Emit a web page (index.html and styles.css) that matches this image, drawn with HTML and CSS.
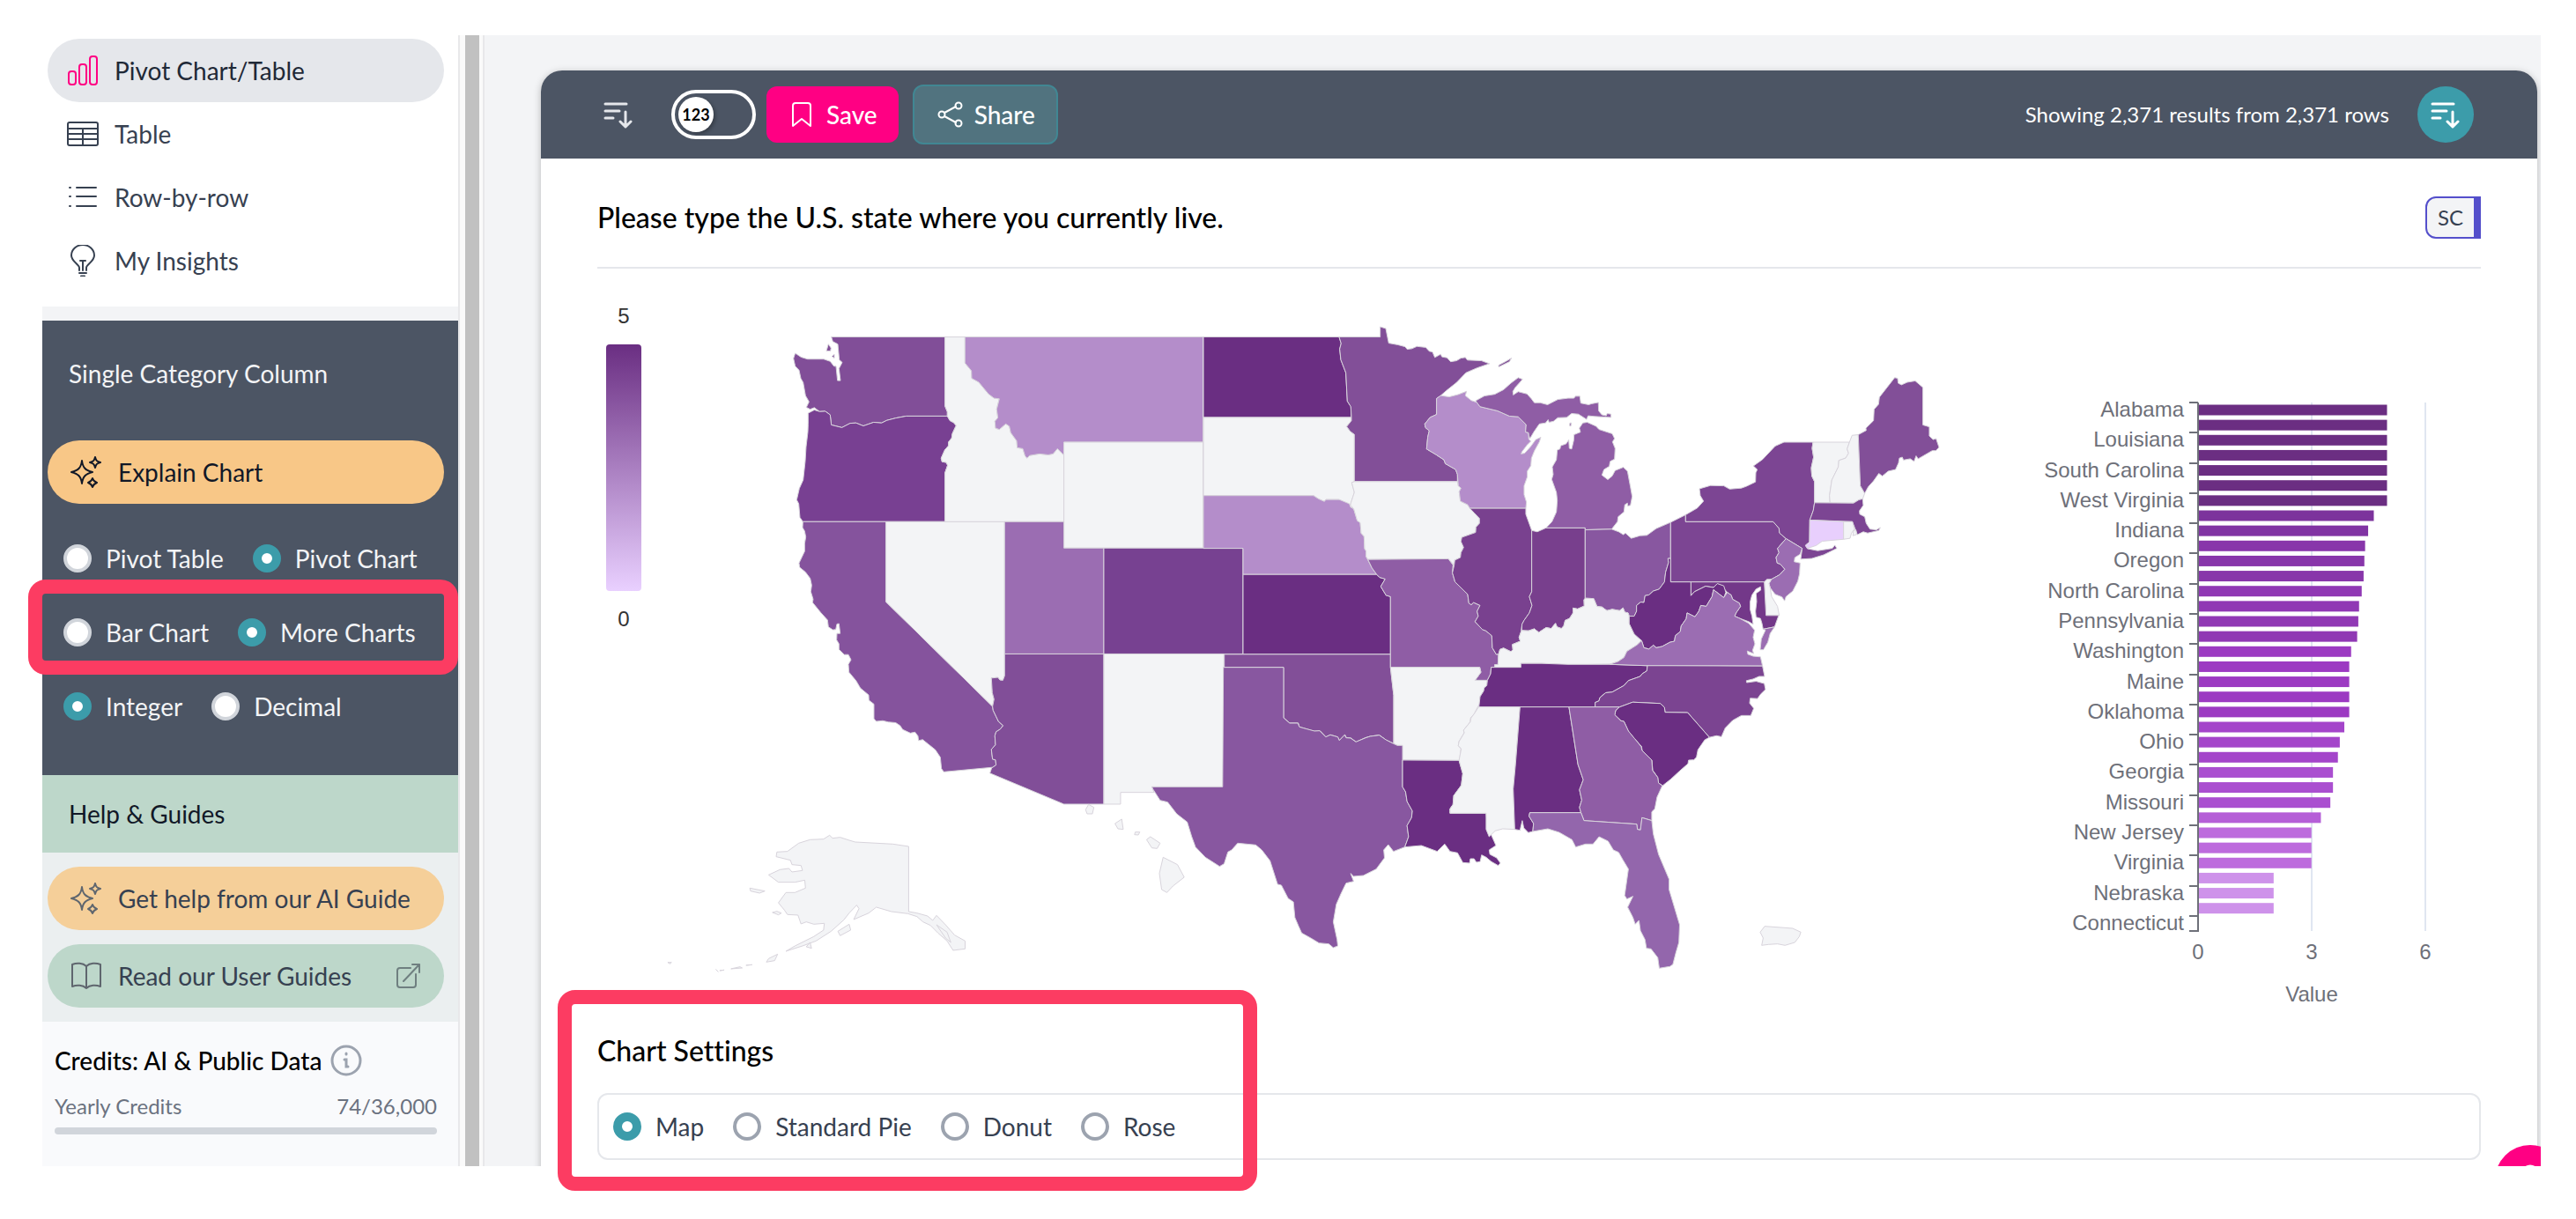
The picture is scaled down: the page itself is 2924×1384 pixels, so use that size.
FILE: index.html
```html
<!DOCTYPE html>
<html lang="en">
<head>
    <meta charset="UTF-8">
    <meta name="viewport" content="width=device-width, initial-scale=1">
    <title>Pivot Chart/Table</title>
    <link rel="stylesheet" href="styles.css">
</head>
<body>
    <div class="page">
        <div class="app">
            <aside class="sidebar">
                <nav class="nav">
                    <a class="nav-item active" href="#">
                        <svg class="icon" viewBox="0 0 36 36"><rect x="2" y="19" width="8" height="15" rx="3"/><rect x="14" y="11" width="8" height="23" rx="3"/><rect x="26" y="2" width="8" height="32" rx="3"/></svg>
                        Pivot Chart/Table
                    </a>
                    <a class="nav-item" href="#">
                        <svg class="icon" viewBox="0 0 36 36"><rect x="1" y="5" width="34" height="26" rx="2"/><path d="M1 12h34M1 18h34M1 24h34M18 12v19"/></svg>
                        Table
                    </a>
                    <a class="nav-item" href="#">
                        <svg class="icon" viewBox="0 0 36 36"><path d="M11 7h22M11 17h22M11 28h22M3 7h1M3 17h1M3 28h1"/></svg>
                        Row-by-row
                    </a>
                    <a class="nav-item" href="#">
                        <svg class="icon" viewBox="0 0 36 36"><path d="M14 29v-3c0-4-9-7-9-14a13 12 0 0 1 26 0c0 7-9 10-9 14v3M18 18v11M15 18h6M14 32h8M16 35.500h4"/></svg>
                        My Insights
                    </a>
                </nav>
                <section class="controls">
                    <h2 class="side-title">Single Category Column</h2>
                    <button class="pill orange" type="button">
                        <svg class="icon" viewBox="0 0 36 36"><path d="M13 5c1 8 4 11 12 13-8 2-11 5-12 13-1-8-4-11-12-13 8-2 11-5 12-13zM28 1c1 4 2 5 6 6-4 1-5 2-6 6-1-4-2-5-6-6 4-1 5-2 6-6zM25 25c1 3 2 4 5 5-3 1-4 2-5 5-1-3-2-4-5-5 3-1 4-2 5-5z"/></svg>
                        Explain Chart
                    </button>
                    <div class="radio-rows">
                        <div class="radio-row">
                            <label class="radio"><input type="radio" name="pivot">Pivot Table</label>
                            <label class="radio"><input type="radio" name="pivot" checked>Pivot Chart</label>
                        </div>
                        <div class="radio-row">
                            <label class="radio"><input type="radio" name="charts">Bar Chart</label>
                            <label class="radio"><input type="radio" name="charts" checked>More Charts</label>
                        </div>
                        <div class="radio-row">
                            <label class="radio"><input type="radio" name="number" checked>Integer</label>
                            <label class="radio"><input type="radio" name="number">Decimal</label>
                        </div>
                    </div>
                </section>
                <h2 class="side-title help-title">Help &amp; Guides</h2>
                <section class="help">
                    <button class="pill orange" type="button">
                        <svg class="icon" viewBox="0 0 36 36"><path d="M13 5c1 8 4 11 12 13-8 2-11 5-12 13-1-8-4-11-12-13 8-2 11-5 12-13zM28 1c1 4 2 5 6 6-4 1-5 2-6 6-1-4-2-5-6-6 4-1 5-2 6-6zM25 25c1 3 2 4 5 5-3 1-4 2-5 5-1-3-2-4-5-5 3-1 4-2 5-5z"/></svg>
                        Get help from our AI Guide
                    </button>
                    <a class="pill green" href="#">
                        <svg class="icon" viewBox="0 0 36 36"><path d="M18 7C14 3 7 3 2 5v25c5-2 12-2 16 2 4-4 11-4 16-2V5c-5-2-12-2-16 2zv25"/></svg>
                        Read our User Guides
                        <svg class="icon external" viewBox="0 0 28 28"><path d="M16 5H4a3 3 0 0 0-3 3v16a3 3 0 0 0 3 3h15a3 3 0 0 0 3-3V12M8 20L26 1M18 1h8v9"/></svg>
                    </a>
                </section>
                <section class="credits">
                    <h3 class="credits-title">Credits: AI &amp; Public Data
                        <svg class="info" viewBox="0 0 36 36"><circle cx="18" cy="18" r="16"/><path d="M18 10v1M16 17h2v8h2"/></svg>
                    </h3>
                    <div class="credits-line"><span>Yearly Credits</span><span>74/36,000</span></div>
                    <div class="credits-bar"></div>
                </section>
            </aside>
            <div class="scrollbar"></div>
            <main class="main">
                <article class="card">
                    <header class="toolbar">
                        <button class="sort" type="button" aria-label="Sort">
                            <svg viewBox="0 0 36 32"><path d="M3 4h24M3 12h16M3 20h9M26 13v16M20 24l6 6 6-6"/></svg>
                        </button>
                        <button class="toggle" type="button" role="switch" aria-checked="false"><span class="knob">123</span></button>
                        <button class="btn save" type="button">
                            <svg class="icon" viewBox="0 0 32 32"><path d="M6 29V6a3 3 0 0 1 3-3h14a3 3 0 0 1 3 3v23l-10-8z"/></svg>
                            Save
                        </button>
                        <button class="btn share" type="button">
                            <svg class="icon" viewBox="0 0 32 32"><circle cx="7" cy="16" r="3.500"/><circle cx="26" cy="6" r="3.500"/><circle cx="26" cy="26" r="3.500"/><path d="M10 14l13-7M10 18l13 7"/></svg>
                            Share
                        </button>
                        <span class="results">Showing 2,371 results from 2,371 rows</span>
                        <button class="sort round" type="button" aria-label="Sort results">
                            <svg viewBox="0 0 36 32"><path d="M3 4h24M3 12h16M3 20h9M26 13v16M20 24l6 6 6-6"/></svg>
                        </button>
                    </header>
                    <div class="card-body">
                        <div class="question">
                            <h1>Please type the U.S. state where you currently live.</h1>
                            <span class="badge">SC</span>
                        </div>
                        <div class="charts">
                            <div class="legend">
                                <span>5</span>
                                <div class="legend-scale"></div>
                                <span>0</span>
                            </div>
                            <svg class="map" viewBox="0 0 1502 824">
                                <!-- west -->
                                <g transform="translate(142 45) scale(.3333 .3699)">
                                    <path fill="#814e98" d="M191 88H578V300L586 318V331H446L410 337 380 344 362 352 335 350 300 361 275 352 255 353 227 366 191 358 187 327 170 316 151 317 133 305 119 310 106 304 115 287 103 268 95 228 87 215 81 190 68 178 62 154 68 138 88 150 110 156 165 156 187 163 200 178 207 178 212 222 222 222 217 185 228 166 218 158 213 110 196 102ZM181 110L190 122 188 131 174 131ZM201 141V153L193 148Z"/>
                                    <path fill="#784092" d="M112 322L133 312 151 317 170 316 187 327 191 358 227 366 255 353 275 352 300 361 335 350 362 352 380 344 410 337 446 331H586L595 345 608 351 616 360 603 385 601 398 590 411 590 422 578 434 565 460 568 471 582 473 587 482 578 505V655H94L84 642 80 600 73 588 82 553 95 527 102 470 105 425 111 380 112 355Z"/>
                                    <path fill="#85539d" d="M94 655H377V901L740 1222 742 1234 760 1268 776 1281 766 1292 752 1300 748 1312 750 1340 736 1354 740 1384 750 1386 752 1402 740 1409 574 1423 566 1413 562 1378 545 1355 520 1337 502 1324 488 1327 486 1313 476 1301 460 1304 434 1293 425 1281 410 1272 385 1270 366 1266 344 1268 336 1260 336 1215 319 1203 318 1187 290 1166 275 1143 251 1117 249 1093 258 1079 249 1063 235 1063 217 1047 217 1030 209 1018 210 998 221 998 217 968 210 969 206 986 196 987 181 978 178 957 155 934 127 903 129 893 121 870 124 850 119 829 103 810 83 795 81 782 100 746 100 722 104 702 100 684 93 673Z"/>
                                    <path fill="#f3f4f6" d="M377 655H781V1128L775 1142 765 1141 758 1133 736 1135 739 1180 745 1200 740 1222 377 901Z"/>
                                    <path fill="#f3f4f6" d="M578 88H646V168L668 192 669 215 693 227 726 263 745 276 763 278 754 310 758 336 748 347 750 368 763 372 785 355 797 362 802 382 822 407 824 428 843 431 851 454 858 460 866 452 900 447 930 450 946 447 961 431 983 451V655H578V505L587 482 582 473 568 471 565 460 578 434 590 422 590 411 601 398 603 385 616 360 608 351 595 345 586 331 586 318 578 300Z"/>
                                    <path fill="#b48dca" d="M646 88H1457V411H983V451L961 431 946 447 930 450 900 447 866 452 858 460 851 454 843 431 824 428 822 407 802 382 797 362 785 355 763 372 750 368 748 347 758 336 754 310 763 278 745 276 726 263 693 227 669 215 668 192 646 168Z"/>
                                    <path fill="#f3f4f6" d="M983 411H1457V736H983Z"/>
                                    <path fill="#9b6db2" d="M781 655H983V736H1119V1061H781Z"/>
                                    <path fill="#774191" d="M1119 736H1593V1061H1119Z"/>
                                    <path fill="#814e98" d="M781 1061H1119V1522H983L731 1427 737 1411 752 1402 750 1386 740 1384 736 1354 750 1340 748 1312 752 1300 766 1292 776 1281 760 1268 742 1234 740 1222 745 1200 739 1180 736 1135 758 1133 765 1141 775 1142 781 1128Z"/>
                                    <path fill="#f3f4f6" d="M1119 1061H1528L1525 1469H1283L1290 1486H1176V1522H1119Z"/>
                                </g>
                                <!-- central -->
                                <g transform="translate(602 45) scale(.3333 .3699)">
                                    <path fill="#6a2e82" d="M78 88H540L547 108 542 125 546 158 563 198 568 285 580 302 582 335H78Z"/>
                                    <path fill="#f3f4f6" d="M78 335H582V345L566 363 578 378 592 387V532L583 535 592 565 580 598 579 604 540 587 495 587 490 593 470 585 453 575H78Z"/>
                                    <path fill="#b48dca" d="M78 575H453L470 585 490 593 495 587H540L575 600 579 610 590 616 602 652 612 658 615 690 625 700 627 738 632 745 632 762 652 797 668 817H213V737H78Z"/>
                                    <path fill="#6a2e82" d="M213 817H668L678 826 697 831 682 854 700 881 715 885V1062H213Z"/>
                                    <path fill="#824f98" d="M149 1062H715V1102L726 1188V1336L700 1325 677 1310 645 1314 630 1318 598 1331 580 1319 565 1318 560 1309 541 1326 535 1316 510 1309 495 1316 475 1297 455 1298 405 1285 401 1273 372 1273 351 1257V1102H149Z"/>
                                    <path fill="#824f98" d="M540 88H680V57L699 62 709 107 740 112 765 118 772 126 788 124 805 117 835 120 847 132 858 134 866 151 886 141 890 149 908 152 920 164 940 161 955 153 970 151 977 159 1025 161 1052 170 1010 183 972 198 940 228 905 253 886 268 872 277V326L850 335 832 355 834 366 847 376 842 395 838 432 868 448 897 465 902 477 937 495 943 510V532H592V387L578 378 566 363 582 345V335L580 302 568 285 563 198 546 158 542 125 547 108Z"/>
                                    <path fill="#f3f4f6" d="M592 532H943L946 545 955 552 949 563 953 592 978 603 1000 628 1018 645 1018 660 1006 672 1005 688 958 703 955 716 964 734 955 750 953 765 934 773 932 788 912 769 638 771 632 762 632 745 627 738 625 700 615 690 612 658 602 652 590 616 579 604 580 598 592 565 583 535Z"/>
                                    <path fill="#8f5da5" d="M638 771L912 769 928 788 926 812 935 840 978 878 982 905 990 910 998 903 1020 912 1010 930 1014 945 1003 962 1028 986 1040 990 1060 1005 1062 1042 1075 1062 1083 1062 1081 1094 1070 1094 1070 1102 1058 1102 1056 1122 1045 1142H1003L1023 1117 1019 1102H715V885L700 881 682 854 697 831 678 826 668 817 652 797Z"/>
                                    <path fill="#f3f4f6" d="M715 1102H1019L1023 1117 1003 1142H1045L1043 1158 1034 1165 1032 1175 1020 1192 1020 1212 1012 1224 1000 1245 988 1257 986 1270 964 1295 966 1303 948 1330 946 1343 955 1352 950 1388 755 1386V1342H738L726 1336V1188Z"/>
                                    <path fill="#b48dca" d="M886 268L915 272 945 265 974 255 970 268 990 283 1010 289 1020 302 1080 315 1120 331 1150 333 1177 357 1175 380 1185 382 1186 402 1193 408 1180 420 1163 440 1160 447 1172 445 1193 424 1210 403 1227 396 1222 410 1205 438 1195 460 1193 483 1181 500 1181 517 1170 545 1170 572 1178 595 1176 614H985L978 603 953 592 949 563 955 552 946 545 943 510 937 495 902 477 897 465 868 448 838 432 842 395 847 376 834 366 832 355 850 335 872 326V277Z"/>
                                    <path fill="#79418f" d="M985 614H1176V632L1196 682V870L1188 885 1197 912 1188 935 1170 958 1163 970 1160 992 1153 1010 1157 1022 1130 1032 1132 1048 1125 1054 1100 1043 1088 1047 1083 1062 1075 1062 1062 1042 1060 1005 1040 990 1028 986 1003 962 1014 945 1010 930 1020 912 998 903 990 910 982 905 978 878 935 840 926 812 932 788 934 773 953 765 955 750 964 734 955 716 958 703 1005 688 1006 672 1018 660 1018 645 1000 628Z"/>
                                    <path fill="#783f8d" d="M1196 682L1215 686 1245 674H1378V890L1374 895 1375 914 1352 923 1337 920 1337 935 1325 952 1310 958 1305 975 1297 983 1282 978 1277 967 1262 983 1245 980 1220 995 1205 984 1185 990 1162 989 1163 970 1170 958 1188 935 1197 912 1188 885 1196 870Z"/>
                                    <path fill="#8f5da5" d="M1005 284L1035 269 1070 264 1100 250 1125 230 1150 213 1165 218 1140 243 1132 255 1133 266 1150 256 1180 263 1195 278 1205 290 1225 290 1250 296 1285 280 1320 276 1340 276 1345 270 1360 270 1363 291 1390 296 1400 293 1423 289 1424 315 1435 327 1450 330 1453 323 1466 325 1466 335 1410 332 1388 330 1383 341 1355 325 1332 323 1315 335 1285 336 1270 347 1255 350 1252 342 1243 352 1222 355 1203 380 1190 400 1186 390 1185 382 1175 380 1177 357 1150 333 1120 331 1080 315 1020 302ZM1326 352L1331 352 1329 362 1325 360Z"/>
                                    <path fill="#824f98" d="M1083 175L1108 163 1127 153 1120 164 1084 180Z"/>
                                </g>
                                <!-- east -->
                                <g transform="translate(1042 45) scale(.3333 .3699)">
                                    <path fill="#8f5da5" d="M-75 674L-55 655-40 625-37 590-40 565-56 525-51 510-54 487-40 465-37 435-28 432-25 422-7 416 2 404 4 430 12 432 19 405 20 388 42 380 38 368 50 352 65 350 95 362 105 372 150 385 158 400 151 410 160 430 158 463 143 470 140 485 122 495 115 512 135 526 150 515 160 498 188 488 202 500 212 548 218 578 212 605 203 607 202 598 193 603 190 625 170 640 168 655 148 678 58 680V674Z"/>
                                    <path fill="#8857a0" d="M58 680L148 678 172 686 188 695 195 690 215 706 245 698 268 697 300 676 349 657V768L340 768 342 780 332 810 328 840 310 862 290 868 275 880 262 882 258 903 247 902 233 912 233 930 225 945 208 945 204 935 193 933 187 920 175 928 150 924 132 928 115 917 98 915 87 891 58 890Z"/>
                                    <path fill="#f3f4f6" d="M58 890L87 891 98 915 115 917 132 928 150 924 175 928 187 920 193 933 204 935 208 945 208 968 225 1000 250 1020 235 1033 200 1053 190 1072 170 1084 142 1092 0 1095-90 1090-161 1090V1102H-250V1094H-239L-237 1062-232 1047-220 1043-195 1054-188 1048-190 1032-163 1022-167 1010-160 992-158 989-135 990-115 984-100 995-75 980-58 983-43 967-38 978-23 983-15 975-10 958 5 952 17 935 17 920 32 923 55 914 54 895Z"/>
                                    <path fill="#6a2e82" d="M-262 1102H-161V1090L-90 1090 0 1093 142 1093 270 1097 268 1113 252 1122 245 1130 205 1143 190 1158 150 1178 128 1180 108 1195 105 1205 92 1210V1224H-304L-300 1192-288 1175-286 1165-277 1158-275 1142-264 1122Z"/>
                                    <path fill="#7c4593" d="M349 657L400 634V655H698L718 675 720 690 742 707 713 737 718 750 708 765 712 782 722 785 738 801 720 818 692 832 668 840H349Z"/>
                                    <path fill="#7c4593" d="M400 634L440 613 461 592 450 575 447 554 485 544 530 545 550 555 590 552 608 546 638 533 639 505 644 495 631 484 662 464 705 423 735 411H834L831 430 836 457 828 490 830 515 839 532V597L835 620 823 650 822 717 808 728 815 738 850 744 900 737 908 727 915 737 870 757 830 768 792 770 797 737 742 707 720 690 718 675 698 655H400Z"/>
                                    <path fill="#9b6db2" d="M742 707L797 737 790 755 772 765 770 778 790 782 788 815 782 838 765 868 742 885 737 898 728 886 705 878 688 858 684 845 692 832 720 818 738 801 722 785 712 782 708 765 718 750 713 737Z"/>
                                    <path fill="#f3f4f6" d="M668 840L677 832 692 832 684 845 688 858 693 885 713 915 719 943H674Z"/>
                                    <path fill="#733889" d="M418 840H668L674 943H717L703 978 664 985 660 967 655 952 640 948 638 930 642 900 640 875 656 865 655 855 640 862 626 880 620 900 620 925 626 945 630 970 615 962 585 952 567 945 572 935 587 915 583 905 560 893 555 880 542 872 528 858 508 848 495 857 468 853 430 870 418 882Z"/>
                                    <path fill="#6a2e82" d="M349 768V840H418V882L430 870 468 853 495 857 508 845 530 852 537 872 530 888 495 864 490 885 470 915 452 912 445 930 432 947 405 935 402 953 385 975 382 992 365 1005 362 1022 347 1025 320 1038 300 1042 290 1034 275 1046 258 1042 250 1020 225 1000 208 968V945H225L233 930 233 912 247 902 258 903 262 882 275 880 290 868 310 862 328 840 332 810 342 780 340 768Z"/>
                                    <path fill="#9b6db2" d="M495 864L530 888 542 872 555 880 560 893 583 905 587 915 572 935 567 945 585 952 615 967 635 988 630 1010 636 1030 628 1050 632 1060 610 1052 612 1062 630 1068 655 1070 662 1098 330 1097 270 1097 142 1093 170 1084 190 1072 200 1053 235 1033 250 1020 258 1042 275 1046 290 1034 300 1042 320 1038 347 1025 362 1022 365 1005 382 992 385 975 402 953 405 935 432 947 445 930 452 912 470 915 490 885ZM664 985L703 978 688 998 680 1025 665 1048 654 1048 658 1015 672 988Z"/>
                                    <path fill="#7b4491" d="M270 1097H330L662 1098 669 1130 650 1130 630 1138 607 1143 608 1149 640 1145 668 1152 672 1170 655 1185 645 1198 620 1197 618 1212 632 1228 622 1250 590 1250 560 1265 535 1288 522 1315 505 1312 481 1317 407 1241 330 1240 328 1225 314 1213 220 1209 175 1224H92V1210L105 1205 108 1195 128 1180 150 1178 190 1158 205 1143 245 1130 252 1122 268 1113Z"/>
                                    <path fill="#6a2e82" d="M175 1224L220 1209 314 1213 328 1225 330 1240 407 1241 481 1317 465 1325 442 1355 437 1378 428 1386 410 1387 408 1398 380 1420 350 1445 322 1465 307 1457 305 1440 288 1418 285 1387 252 1357 250 1345 225 1320 205 1298 190 1268 180 1266 158 1248 162 1235Z"/>
                                    <path fill="#f3f4f6" d="M834 411H958L950 432 955 445 945 460 922 467 920 487 898 527 890 575 892 597H839V532L830 515 828 490 836 457 831 430Z"/>
                                    <path fill="#f3f4f6" d="M958 411L967 390 988 388 995 545 1010 568 1003 585 990 588 972 598 892 597 890 575 898 527 920 487 922 467 945 460 955 445 950 432Z"/>
                                    <path fill="#824f98" d="M988 388L1015 375 1014 368 1040 345 1042 310 1057 295 1060 273 1112 213 1122 215 1124 230 1135 235 1155 227 1182 223 1208 243V358L1230 364 1230 392 1243 403 1253 400 1263 427 1252 437 1240 437 1215 450 1192 462 1185 453 1178 470 1165 462 1142 466 1138 457 1128 460 1125 475 1115 495 1090 500 1070 515 1058 507 1040 530 1022 548 1010 568 995 545Z"/>
                                    <path fill="#7c4593" d="M839 597L972 598 990 588 1003 585 1005 605 992 622 993 632 1010 640 1015 660 1028 678 1050 680 1063 673 1058 682 1020 690 1005 686 985 695 968 655 823 650 835 620Z"/>
                                    <path fill="#e8cffd" d="M823 650L938 655V709L865 715 845 728 815 737 808 728 822 717Z"/>
                                    <path fill="#f3f4f6" d="M938 655H968L975 678 965 690 960 706 938 709ZM972 682L980 680 983 694 970 698Z"/>
                                </g>
                                <!-- south and islands -->
                                <g transform="translate(2 545) scale(.8546 .3333)">
                                    <path fill="#8857a0" d="M759-277H839V-105L847-87 858-87 860-74 880-60 887-61 895-40 901-47 911-40 913-28 920-47 922-37 928-36 935-23 948-37 954-42 966-46 975-30 985-17 990-11 997-11V130L1001 147 1003 180 1010 212 1009 235 1003 262 1005 300 1000 335 985 350 978 327 972 345 973 372 962 410 945 432 932 435 928 425 932 452 922 458 915 495 909 530 905 590 910 650 911 672 905 678 899 665 886 662 875 645 863 628 859 605 854 575 852 522 845 510 836 465 831 462 821 382 810 345 802 328 778 322 770 345 765 352 760 392 754 401 735 370 722 335 717 300 711 250 697 222 685 182 675 176 666 140 664 130H758Z"/>
                                    <path fill="#6a2e82" d="M997 39L1072 40 1077 85 1075 125 1065 160 1064 190 1060 205 1060 220H1108L1110 270 1115 295 1119 318 1121 330 1112 345 1113 360 1122 372 1127 390 1124 398 1115 385 1108 370 1102 362 1100 385 1095 387 1092 375 1087 375 1086 390 1077 388 1070 355 1060 350 1053 325 1043 350 1022 330 1000 335 1005 300 1003 262 1009 235 1010 212 1003 180 1001 147 997 130Z"/>
                                    <path fill="#f3f4f6" d="M1098-142H1153L1147 54 1144 137 1146 275 1130 273 1120 280 1112 300 1108 275 1108 220H1060V205L1064 190 1065 160 1075 125 1077 85 1072 40 1075 0 1071-10 1072-24 1079-54 1078-63 1087-91 1088-105 1092-118Z"/>
                                    <path fill="#6a2e82" d="M1153-142H1218L1230 54 1237 106 1232 140 1235 175 1232 200 1234 218H1166L1165 230 1171 255 1170 282 1164 286 1158 270 1156 245 1153 278 1146 275 1144 137 1147 54Z"/>
                                    <path fill="#8f5da5" d="M1218-142H1285L1280-130 1279-115 1287-95 1291-93 1297-60 1305-35 1314-7 1315 6 1328 39 1329 74 1336 98 1337 117 1342 126 1335 165 1332 205 1328 215V245L1322 240 1315 235 1313 277 1309 275 1308 257 1238 245 1234 218 1232 200 1235 175 1232 140 1237 106 1230 54Z"/>
                                    <path fill="#9366ac" d="M1166 218H1234L1238 245 1308 257 1309 275 1313 277 1315 235 1328 245 1330 290 1337 360 1351 445 1351 480 1358 540 1365 600 1364 660 1360 695 1356 735 1352 742 1338 748 1336 712 1327 682 1321 680 1319 650 1313 620 1311 585 1306 598 1303 575 1296 540 1303 503 1295 512 1292 500 1297 410 1290 380 1284 353 1277 345 1270 315 1258 300 1250 325 1240 325 1227 335 1222 310 1205 285 1190 273 1170 282 1171 255 1165 230Z"/>
                                    <path fill="#f3f4f6" d="M236 295L240 305 250 302 262 312 270 318 320 325 341 333V555L352 560 366 570 373 585 378 568 390 600 402 635 416 655 416 682 400 687 392 655 380 628 370 602 360 590 352 572 340 562 318 555 298 540 288 560 268 582 275 545 272 533 262 560 255 583 238 622 218 655 200 672 178 690 190 672 215 640 228 618 229 595 215 598 205 590 198 597 194 567 180 565 176 550 168 525 178 490 190 490 204 475 203 448 190 455 168 455 155 430 170 412 182 408 186 420 200 415 198 398 186 395 184 380 165 368 166 352 180 350 195 322 210 310 228 308Z"/>
                                    <path fill="#f3f4f6" d="M130 475L150 485 143 492 131 485ZM160 558L166 554 172 560 168 566ZM262 598L264 618 250 637 247 622ZM167 700L163 722 152 727 155 715ZM105 750L117 743 120 747ZM85 752L88 760ZM90 756L96 754ZM21 728H26L24 733ZM125 738L133 736ZM378 600L392 625 397 660 390 645ZM210 660L212 680 205 675Z"/>
                                    <path fill="#f3f4f6" d="M580 190L587 200 585 222 578 222 576 208ZM624 240L626 275 619 273 615 255ZM642 284H648L646 294 641 293ZM662 300L668 310 675 322 671 340 664 338 657 310ZM679 370L698 395 707 438 692 468 684 490 677 480 674 425Z"/>
                                    <path fill="#f3f4f6" d="M1478 605L1515 612 1526 625 1524 640 1518 660 1505 670 1495 665 1483 667 1474 670 1476 645 1472 625Z"/>
                                </g>
                            </svg>
                            <svg class="bars" id="bars" viewBox="0 0 576 824"></svg>
                        </div>
                        <h2 class="settings-title">Chart Settings</h2>
                        <div class="settings">
                            <label class="radio"><input type="radio" name="type" checked>Map</label>
                            <label class="radio"><input type="radio" name="type">Standard Pie</label>
                            <label class="radio"><input type="radio" name="type">Donut</label>
                            <label class="radio"><input type="radio" name="type">Rose</label>
                        </div>
                    </div>
                </article>
            </main>
            <button class="chat" type="button" aria-label="Chat">
                <svg viewBox="0 0 80 80"><circle cx="40" cy="33" r="9"/></svg>
            </button>
        </div>
        <div class="highlight highlight-charts"></div>
        <div class="highlight highlight-settings"></div>
    </div>
    <script src="chart.js"></script>
</body>
</html>
```
FILE: styles.css
```css
* {
    box-sizing: border-box;
    margin: 0;
    padding: 0;
}
body {
    font-family: Lato, "Liberation Sans", sans-serif;
    font-size: 28px;
    font-variant-ligatures: none;
    line-height: 40px;
    color: #000;
    background-color: #fff;
}
h1, h2, h3 {
    font-weight: 500;
}
button {
    font: inherit;
    font-variant-ligatures: none;
    border: none;
    cursor: pointer;
}
a {
    color: inherit;
    text-decoration: none;
}
.page {
    position: relative;
    padding: 40px 40px 60px 48px;
}
.app {
    position: relative;
    display: flex;
    height: calc(100vh - 100px);
    overflow: hidden;
    background-color: #f3f4f6;
}
.icon {
    width: 36px;
    height: 36px;
    flex: none;
    fill: none;
    stroke: currentColor;
    stroke-width: 2;
    stroke-linecap: round;
    stroke-linejoin: round;
}

/* sidebar */
.sidebar {
    display: flex;
    flex-direction: column;
    flex: none;
    width: 472px;
}
.nav {
    padding: 4px 16px 16px 6px;
    margin-bottom: 16px;
    background-color: #fff;
}
.nav-item, .pill {
    display: flex;
    align-items: center;
    width: 100%;
    height: 72px;
    border-radius: 36px;
}
.nav-item {
    gap: 18px;
    padding-left: 22px;
    color: #374151;
}
.nav-item.active {
    color: #1f2937;
    background-color: #e5e7eb;
}
.nav-item.active .icon {
    stroke: #ff0083;
}
.controls {
    padding: 40px 16px 36px 6px;
    color: #f3f4f6;
    background-color: #4c5564;
}
.side-title {
    padding-left: 24px;
    font-size: 28px;
    font-weight: 400;
}
.pill {
    gap: 18px;
    padding: 0 26px;
    color: #111827;
}
.orange {
    background-color: #f8c787;
}
.green {
    background-color: #bdd7ca;
}
.controls .pill {
    margin-top: 56px;
}
.radio-rows {
    margin-top: 20px;
    padding-left: 18px;
}
.radio-row {
    display: flex;
    align-items: center;
    gap: 33px;
    height: 84px;
}
.radio {
    display: flex;
    align-items: center;
    gap: 16px;
    height: 32px;
    white-space: nowrap;
}
.radio input {
    appearance: none;
    width: 32px;
    height: 32px;
    border: 4px solid #d1d5db;
    border-radius: 50%;
    background-color: #fff;
}
.radio input:checked {
    border: 10px solid #3c9caa;
}
.help-title {
    padding: 24px 30px;
    color: #111827;
    background-color: #bdd7ca;
}
.help {
    display: flex;
    flex-direction: column;
    gap: 16px;
    padding: 16px 16px 16px 6px;
    background-color: #ebeff0;
}
.help .pill {
    color: #374151;
}
.help .orange {
    background-color: #f5cf99;
}
.help .icon {
    stroke: #5f666e;
}
.help .external {
    width: 28px;
    height: 28px;
    margin-left: auto;
    stroke: #6f7f80;
}
.credits {
    flex: 1;
    padding: 24px 24px 0 14px;
    background-color: #f9fafc;
}
.credits-title {
    display: flex;
    align-items: center;
    gap: 10px;
    font-size: 28px;
}
.info {
    width: 36px;
    height: 36px;
    fill: none;
    stroke: #9ca3af;
    stroke-width: 3;
    stroke-linecap: round;
}
.credits-line {
    display: flex;
    justify-content: space-between;
    margin: 12px 0 4px;
    font-size: 24px;
    color: #6b7280;
}
.credits-bar {
    height: 8px;
    border-radius: 4px;
    background-color: #d1d5db;
}
.scrollbar {
    flex: none;
    width: 30px;
    border: 2px solid #e8e8ea;
    border-width: 0 2px;
    background: linear-gradient(#c1c1c1, #c1c1c1) 6px 0 / 16px 100% no-repeat #fafafa;
}

/* main card */
.main {
    flex: 1;
    min-width: 0;
    padding: 40px 4px 0 64px;
}
.card {
    padding-bottom: 40px;
    border-radius: 24px 24px 0 0;
    background-color: #fff;
    box-shadow: 0 2px 8px rgba(0, 0, 0, 0.25);
}
.toolbar {
    display: flex;
    align-items: center;
    height: 100px;
    padding: 0 72px 0 68px;
    border-radius: 24px 24px 0 0;
    color: #fff;
    background-color: #4c5564;
}
.sort {
    width: 40px;
    height: 40px;
    margin-right: 40px;
    background: none;
}
.sort svg {
    display: block;
    width: 36px;
    height: 32px;
    margin: 0 auto;
    fill: none;
    stroke: #e5e7eb;
    stroke-width: 3;
    stroke-linecap: round;
    stroke-linejoin: round;
}
.sort.round {
    width: 64px;
    height: 64px;
    margin: 0 0 0 32px;
    border-radius: 50%;
    background-color: #3c9caa;
}
.sort.round svg {
    stroke: #fff;
}
.toggle {
    width: 96px;
    height: 56px;
    padding: 4px;
    border: 4px solid #fff;
    border-radius: 28px;
    background: none;
}
.knob {
    display: block;
    width: 40px;
    height: 40px;
    border-radius: 50%;
    font-size: 18px;
    font-weight: 700;
    text-align: center;
    color: #000;
    background-color: #fff;
    box-shadow: 2px 2px 4px rgba(0, 0, 0, 0.3);
}
.btn {
    display: flex;
    align-items: center;
    gap: 12px;
    height: 64px;
    border-radius: 12px;
    font-weight: 500;
    color: #fff;
}
.btn .icon {
    width: 32px;
    height: 32px;
}
.save {
    margin: 0 16px 0 12px;
    padding: 0 24px;
    background-color: #ff0083;
}
.share {
    height: 68px;
    padding: 0 24px;
    border: 2px solid #418793;
    background-color: #51737f;
}
.results {
    margin-left: auto;
    font-size: 24px;
}
.card-body {
    padding: 0 64px;
}
.question {
    display: flex;
    align-items: center;
    justify-content: space-between;
    padding: 43px 0 32px;
    border-bottom: 2px solid #e5e7eb;
}
.question h1, .settings-title {
    font-size: 32px;
    line-height: 48px;
}
.badge {
    height: 48px;
    padding: 0 12px;
    border: 2px solid #544fcb;
    border-right-width: 8px;
    border-radius: 12px 0 0 12px;
    font-size: 24px;
    line-height: 44px;
    color: #374151;
    background-color: #f3f4f6;
}
.charts {
    display: flex;
    align-items: flex-start;
}
.legend {
    display: flex;
    flex-direction: column;
    align-items: center;
    gap: 18px;
    flex: none;
    width: 60px;
    padding-top: 40px;
    font-family: "Liberation Sans", sans-serif;
    font-size: 24px;
    line-height: 28px;
    color: #333;
}
.legend-scale {
    width: 40px;
    height: 280px;
    border-radius: 4px;
    background: linear-gradient(#6a2e82, #e9d0ff);
}
.map {
    flex: 1502;
    min-width: 0;
}
.map path {
    stroke: #d8d4dc;
    stroke-width: 1;
    stroke-linejoin: round;
    vector-effect: non-scaling-stroke;
}
.bars {
    flex: 576;
    min-width: 0;
    overflow: visible;
    font-family: "Liberation Sans", sans-serif;
    font-size: 24px;
}
.bars text {
    fill: #6e7079;
}
.bars .grid {
    stroke: #e0e6f1;
    stroke-width: 2;
}
.bars .axis {
    fill: none;
    stroke: #6e7079;
    stroke-width: 2;
}
.settings-title {
    margin: 40px 0 24px;
}
.settings {
    display: flex;
    gap: 33px;
    padding: 20px 16px;
    border: 2px solid #e5e7eb;
    border-radius: 12px;
    color: #374151;
}
.settings input {
    border-color: #9ca3af;
}

/* floating chat button in the corner, cut off by the app frame */
.chat {
    position: absolute;
    right: -28px;
    bottom: -56px;
    width: 80px;
    height: 80px;
    border-radius: 50%;
    background-color: #ff0083;
}
.chat svg {
    display: block;
    fill: none;
    stroke: #fff;
    stroke-width: 3;
}

/* callout frames over the app */
.highlight {
    position: absolute;
    border: 16px solid #fc3c62;
    border-radius: 20px;
    pointer-events: none;
}
.highlight-charts {
    top: 658px;
    left: 32px;
    width: 488px;
    height: 108px;
}
.highlight-settings {
    bottom: 32px;
    left: 633px;
    width: 794px;
    height: 228px;
}
```
FILE: chart.js
```js
const bars = document.getElementById('bars');
const values = [
    5, 5, 5, 5, 5, 5, 5, 4.65, 4.5, 4.42, 4.4, 4.38, 4.33, 4.26, 4.24, 4.21, 4.05,
    4, 4, 4, 4, 3.87, 3.75, 3.7, 3.57, 3.57, 3.5, 3.25, 3, 3, 3, 2, 2, 2, 0
];
// only every second category has a label
const labels = [
    'Alabama', 'Louisiana', 'South Carolina', 'West Virginia', 'Indiana', 'Oregon',
    'North Carolina', 'Pennsylvania', 'Washington', 'Maine', 'Oklahoma', 'Ohio',
    'Georgia', 'Missouri', 'New Jersey', 'Virginia', 'Nebraska', 'Connecticut'
];
const left = 255;
const start = 152;
const height = 600;
const step = height / values.length;
const unit = 42.9;

function barColor(value) {
    if (value >= 5) return '#6b2e82';
    if (value >= 4.6) return '#7c339c';
    if (value >= 4.5) return '#8134a3';
    if (value >= 4.35) return '#8836aa';
    if (value >= 4.2) return '#9038b4';
    if (value >= 4) return '#9c3ac2';
    if (value >= 3.7) return '#a445ca';
    if (value >= 3.5) return '#aa4fd0';
    if (value >= 3.2) return '#b55fd7';
    if (value >= 3) return '#bd6bdd';
    return '#ce92ea';
}

let svg = '';
[3, 6].forEach(v => {
    const x = Math.round(left + v * 43);
    svg += `<path class="grid" d="M${x} ${start}v${height}"/>`;
});
values.forEach((value, i) => {
    const y = start + i * step + 2.5;
    svg += `<rect x="${left}" y="${y}" width="${value * unit}" height="12" fill="${barColor(value)}"/>`;
});
let axis = `M${left} ${start}v${height}h-10`;
labels.forEach((label, i) => {
    const y = Math.round(start + i * 2 * step);
    axis += `M${left} ${y}h-10`;
    svg += `<text x="${left - 16}" y="${Math.round(y + step / 2 + 7)}" text-anchor="end">${label}</text>`;
});
svg += `<path class="axis" d="${axis}"/>`;
[0, 3, 6].forEach(v => {
    svg += `<text x="${left + v * 43}" y="784" text-anchor="middle">${v}</text>`;
});
svg += `<text x="${left + 129}" y="832" text-anchor="middle">Value</text>`;
bars.innerHTML = svg;
```
